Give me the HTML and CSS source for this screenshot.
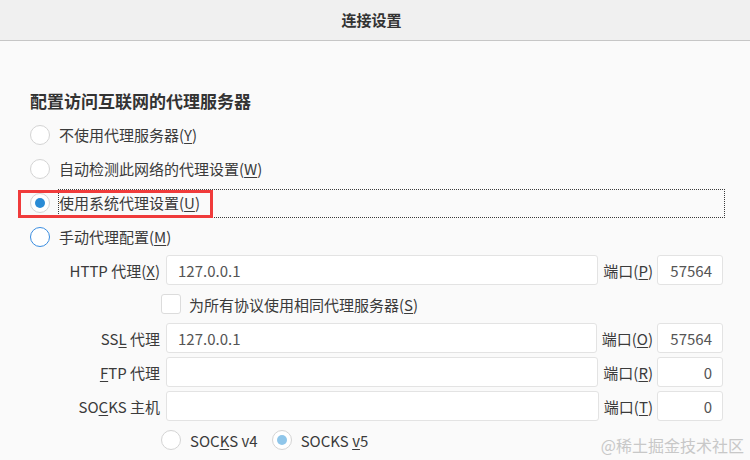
FILE: index.html
```html
<!DOCTYPE html>
<html lang="zh-CN">
<head>
<meta charset="utf-8">
<title>连接设置</title>
<link rel="stylesheet" href="styles.css">
</head>
<body>
<div class="titlebar"><span class="title">连接设置</span></div>
<div class="content">
  <h2 class="heading">配置访问互联网的代理服务器</h2>
  <div class="options">
    <div class="opt"><span class="radio"></span><span class="lbl">不使用代理服务器(<u>Y</u>)</span></div>
    <div class="opt"><span class="radio"></span><span class="lbl">自动检测此网络的代理设置(<u>W</u>)</span></div>
    <div class="opt opt-focus"><span class="radio checked"></span><span class="lbl focus">使用系统代理设置(<u>U</u>)</span><span class="mark"></span></div>
    <div class="opt"><span class="radio hover"></span><span class="lbl">手动代理配置(<u>M</u>)</span></div>
  </div>
  <div class="form">
    <div class="frow">
      <span class="flabel">HTTP 代理(<u>X</u>)</span>
      <span class="field">127.0.0.1</span>
      <span class="plabel">端口(<u>P</u>)</span>
      <span class="port">57564</span>
    </div>
    <div class="crow">
      <span class="check"></span><span class="ctext">为所有协议使用相同代理服务器(<u>S</u>)</span>
    </div>
    <div class="frow">
      <span class="flabel">SS<u>L</u> 代理</span>
      <span class="field">127.0.0.1</span>
      <span class="plabel">端口(<u>O</u>)</span>
      <span class="port">57564</span>
    </div>
    <div class="frow gap">
      <span class="flabel"><u>F</u>TP 代理</span>
      <span class="field"></span>
      <span class="plabel">端口(<u>R</u>)</span>
      <span class="port">0</span>
    </div>
    <div class="frow gap">
      <span class="flabel">SO<u>C</u>KS 主机</span>
      <span class="field"></span>
      <span class="plabel">端口(<u>T</u>)</span>
      <span class="port">0</span>
    </div>
    <div class="srow">
      <span class="radio"></span><span class="stext">SOC<u>K</u>S v4</span>
      <span class="radio checked light"></span><span class="stext">SOCKS <u>v</u>5</span>
    </div>
  </div>
  <div class="watermark">@稀土掘金技术社区</div>
</div>
</body>
</html>
```
FILE: styles.css
```css
* { box-sizing: border-box; }
html, body { margin: 0; padding: 0; }
body {
  width: 750px;
  height: 460px;
  overflow: hidden;
  background: #fafafa;
  color: #3b3b3b;
  font-family: "Noto Sans CJK SC", "Noto Sans", sans-serif;
  font-size: 15px;
}
u { text-decoration-thickness: 1px; text-underline-offset: 2px; }

.titlebar {
  height: 41px;
  background: #f0f0f0;
  border-bottom: 1px solid #c6c6c6;
  display: flex;
  align-items: center;
  justify-content: center;
  padding-right: 7px;
}
.title { font-size: 15px; font-weight: 600; color: #333; line-height: 20px; }

.content {
  position: relative;
  height: 419px;
  padding: 48px 25px 0 30px;
}

.heading {
  margin: 0;
  font-size: 17px;
  line-height: 24px;
  font-weight: 700;
  color: #333;
}

.options { margin-top: 5px; }
.opt { position: relative; height: 34px; display: flex; align-items: center; }

.radio {
  flex: none;
  width: 20px; height: 20px;
  border-radius: 50%;
  border: 1px solid #d4d4d4;
  background: #fff;
  margin-right: 8px;
  display: flex; align-items: center; justify-content: center;
}
.radio.checked::after {
  content: "";
  width: 10px; height: 10px; border-radius: 50%;
  background: #2a8bd5;
}
.radio.checked.light::after { background: #8fc6ea; }
.radio.hover { border: 1.5px solid #3a8de0; }

.lbl {
  height: 29px;
  display: flex; align-items: center;
  border: 1px dotted transparent;
  line-height: 20px;
}
.lbl.focus { flex: 1; border-color: #3a3a3a; }

.mark {
  position: absolute;
  left: -12px; top: 4px;
  width: 195px; height: 28px;
  border: 3px solid #f03b3b;
  pointer-events: none;
}

.form { margin-top: 1px; padding-right: 2px; }
.frow { height: 30px; display: flex; align-items: center; }
.frow.gap { margin-top: 4px; }
.flabel { width: 130px; flex: none; text-align: right; margin-right: 6px; }
.field {
  flex: 1;
  height: 30px;
  border: 1px solid #e3e3e3;
  border-radius: 3px;
  background: #fff;
  padding: 0 11px;
  display: flex; align-items: center;
  color: #555;
}
.plabel { flex: none; margin: 0 4px 0 5px; }
.port {
  flex: none;
  width: 66px; height: 30px;
  border: 1px solid #e3e3e3;
  border-radius: 3px;
  background: #fff;
  padding: 0 10px;
  display: flex; align-items: center; justify-content: flex-end;
  color: #555;
}

.crow { height: 38px; display: flex; align-items: center; padding-left: 131px; }
.check {
  width: 20px; height: 20px;
  border: 1px solid #dcdcdc;
  border-radius: 3px;
  background: #fff;
  margin-right: 8px;
}

.srow { height: 38px; display: flex; align-items: center; padding-left: 131px; }
.srow .radio { margin-right: 9px; }
.stext { margin-right: 14px; }

.watermark {
  position: absolute;
  right: 6px; bottom: 4px;
  font-size: 16px;
  color: #c8c8c8;
  line-height: 22px;
}
```
